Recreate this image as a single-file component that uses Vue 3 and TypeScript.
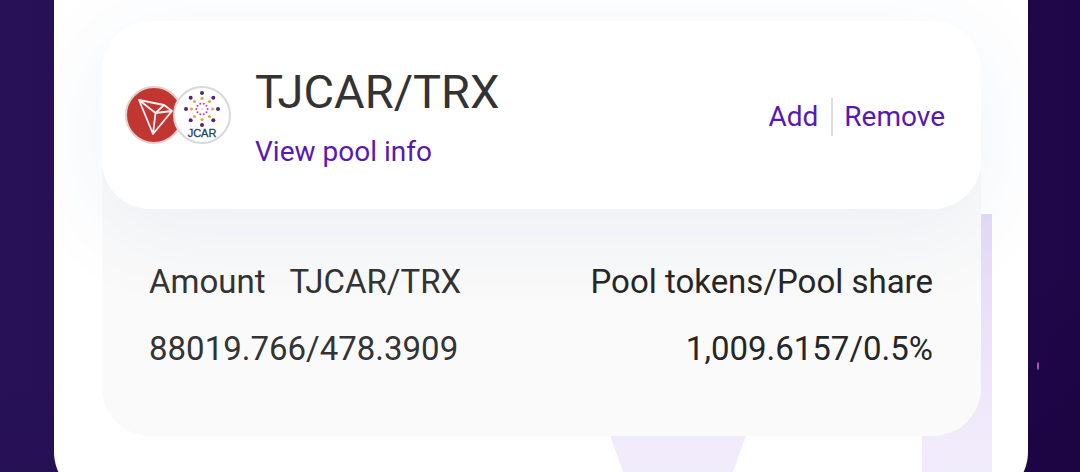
<script setup lang="ts">
interface Dot {
  x: number
  y: number
  r: number
  color: string
}

function ring(radius: number, r: number, count: number, color: string): Dot[] {
  return Array.from({ length: count }, (_, i) => {
    const angle = (i * 2 * Math.PI) / count
    return { x: 29 + radius * Math.cos(angle), y: 23 + radius * Math.sin(angle), r, color }
  })
}

const dots: Dot[] = [
  ...ring(16, 2, 8, '#4d2a74'),
  ...ring(10.6, 1.6, 8, '#eda548'),
  ...ring(5.6, 1, 10, '#c93a9c'),
  { x: 29, y: 23, r: 0.5, color: '#c93a9c' },
]

const pair = 'TJCAR/TRX'
const amount = '88019.766/478.3909'
const share = '1,009.6157/0.5%'
</script>

<template>
  <main class="page">
    <span class="spark" aria-hidden="true"></span>
    <section class="panel">
      <svg class="watermark" viewBox="0 0 418 286" aria-hidden="true">
        <defs>
          <linearGradient id="mark" x1="0" y1="0" x2="0" y2="286" gradientUnits="userSpaceOnUse">
            <stop offset="0" stop-color="#e3daf8" />
            <stop offset="0.76" stop-color="#f1eafb" />
            <stop offset="1" stop-color="#f0edfc" />
          </linearGradient>
        </defs>
        <path fill="url(#mark)" d="M348 286V4q0-3 3-3H404q3-1 6-1h8V286ZM0 120H208L149 286H59Z" />
      </svg>

      <article class="pool">
        <header class="summary">
          <div class="tokens">
            <svg class="token" viewBox="0 0 58 58" role="img" aria-label="TRX">
              <circle cx="29" cy="29" r="28" fill="#c23631" stroke="#e3cfce" stroke-width="2" />
              <path
                d="M14 14 39 19 47 25 28 48ZM14 14 30.500 27 47 25M39 19 30.500 27 28 48"
                fill="none"
                stroke="#fff2f2"
                stroke-width="1.8"
                stroke-linejoin="round"
              />
            </svg>
            <svg class="token token-front" viewBox="0 0 58 58" role="img" aria-label="JCAR">
              <circle cx="29" cy="29" r="28" fill="#fff" stroke="#d9d9dc" stroke-width="2" />
              <circle v-for="(dot, i) in dots" :key="i" :cx="dot.x" :cy="dot.y" :r="dot.r" :fill="dot.color" />
              <text x="29" y="51" text-anchor="middle" class="token-name">JCAR</text>
            </svg>
          </div>
          <div class="identity">
            <h1>{{ pair }}</h1>
            <a href="#pool">View pool info</a>
          </div>
          <nav class="actions">
            <a href="#add">Add</a>
            <a href="#remove">Remove</a>
          </nav>
        </header>

        <dl class="details">
          <div>
            <dt class="amount-label"><span>Amount</span><span>{{ pair }}</span></dt>
            <dd>{{ amount }}</dd>
          </div>
          <div class="share">
            <dt>Pool tokens/Pool share</dt>
            <dd>{{ share }}</dd>
          </div>
        </dl>
      </article>
    </section>
  </main>
</template>

<style>
body {
  margin: 0;
}
</style>

<style scoped>
.page {
  position: relative;
  box-sizing: border-box;
  height: 100vh;
  overflow: hidden;
  padding: 0 52px 0 54px;
  background: linear-gradient(172deg, transparent 60%, rgba(16, 0, 40, 0.14)),
    linear-gradient(90deg, #281157, #1f0648);
  color: #333;
  font-family: Roboto, "Liberation Sans", sans-serif;
}

.spark {
  position: absolute;
  top: 362px;
  right: 41px;
  width: 2px;
  height: 8px;
  border-radius: 50%;
  background: #b25fb5;
}

.panel {
  position: relative;
  overflow: hidden;
  padding: 21px 47px 64px 48px;
  border-radius: 0 0 48px 48px;
  background: #fff;
}

.watermark {
  position: absolute;
  right: 36px;
  bottom: 0;
  width: 418px;
  height: 286px;
}

.pool {
  position: relative;
  border-radius: 48px;
  background: #fafafa;
}

.summary {
  display: flex;
  align-items: center;
  box-sizing: border-box;
  min-height: 188px;
  padding: 0 36px 0 23px;
  border-radius: 48px;
  background: #fff;
  box-shadow: 0 20px 96px rgba(47, 83, 151, 0.07);
}

.tokens {
  display: flex;
  width: 106px;
  margin-right: 24px;
}

.token {
  flex: none;
  width: 58px;
  height: 58px;
}

.token-front {
  margin-left: -10px;
}

.token-name {
  fill: #1d4263;
  stroke: #1d4263;
  stroke-width: 0.3px;
  font: 11px "Liberation Sans", sans-serif;
}

.identity {
  display: flex;
  flex-direction: column;
  align-items: flex-start;
  gap: 14px;
  padding-top: 4px;
}

h1 {
  margin: 0;
  font-size: 47px;
  font-weight: 400;
  line-height: 56px;
}

a {
  color: #5719b5;
  font-size: 28px;
  line-height: 36px;
  text-decoration: none;
}

.actions {
  display: flex;
  margin-left: auto;
  padding-top: 4px;
}

.actions a {
  line-height: 38px;
}

.actions a + a {
  margin-left: 13px;
  padding-left: 11px;
  border-left: 2px solid #ddd;
}

.details {
  display: flex;
  justify-content: space-between;
  margin: 0;
  padding: 53px 48px 68px 47px;
  font-size: 33px;
  line-height: 39px;
}

dd {
  margin: 28px 0 0;
}

.amount-label {
  display: flex;
  gap: 24px;
}

.share {
  color: #262626;
  text-align: right;
}
</style>
